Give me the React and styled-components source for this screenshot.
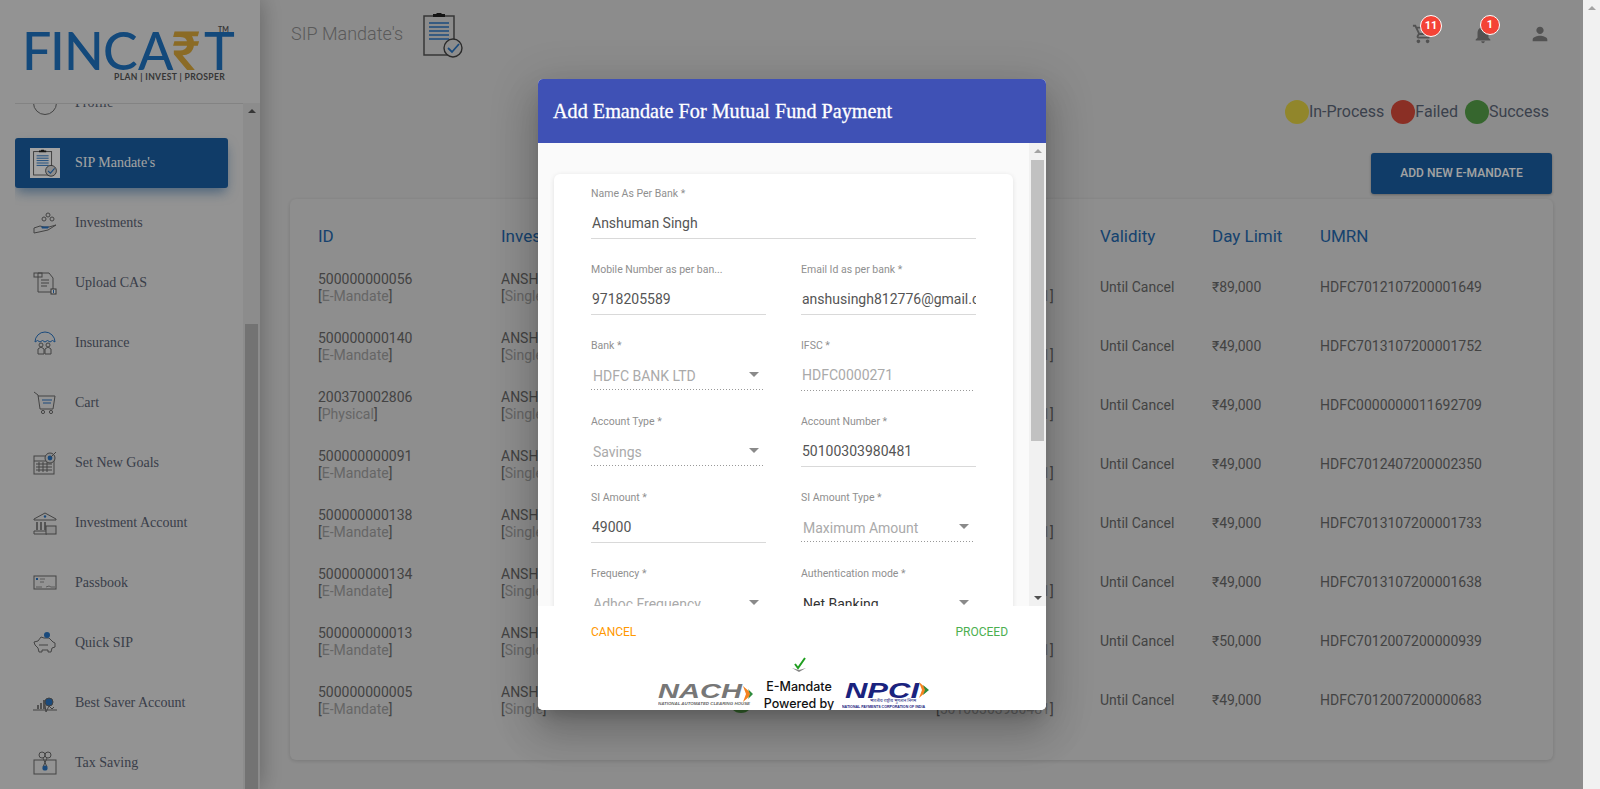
import React from 'react';
import styled, { createGlobalStyle } from 'styled-components';
import { MdOutlineShoppingCart, MdNotifications, MdPerson } from 'react-icons/md';

const Global = createGlobalStyle`
  html, body { margin: 0; height: 100%; overflow: hidden; }
  body { font-family: Roboto, "Liberation Sans", sans-serif; background: #dbdbdb; }
  * { box-sizing: border-box; }
`;

const Page = styled.div`display: flex; width: 1600px; height: 789px; overflow: hidden;`;
const App_ = styled.div`position: relative; display: flex; width: 1583px; height: 789px;`;
const PageScroll = styled.div`width: 17px; background: #f1f1f1; display: flex; justify-content: center; padding-top: 6px; position: relative;`;
const Tri = styled.span`
  display: block; width: 0; height: 0;
  border-left: ${p => p.$s || 4}px solid transparent;
  border-right: ${p => p.$s || 4}px solid transparent;
  ${p => p.$down ? `border-top: ${p.$h || 4}px solid ${p.$c || '#a3a3a3'};` : `border-bottom: ${p.$h || 4}px solid ${p.$c || '#a3a3a3'};`}
`;

/* sidebar */
const Sidebar = styled.aside`
  width: 260px; height: 789px; flex: none; background: #e6e6e6; display: flex; flex-direction: column;
  box-shadow: 0 0 22px rgba(0,0,0,.3); position: relative;
`;
const LogoBox = styled.div`height: 103px; flex: none; padding: 24px 0 0 22px;`;
const NavArea = styled.div`flex: 1; display: flex; min-height: 0;`;
const NavScroll = styled.div`flex: 1; margin-left: 15px; overflow: hidden; border-top: 1px solid #cdcdcd; margin-right: -2px;`;
const NavList = styled.ul`list-style: none; margin: -26px 0 0; padding: 0; width: 213px; display: flex; flex-direction: column; gap: 10px;`;
const NavItem = styled.li`
  height: 50px; flex: none; padding-left: 15px; display: flex; align-items: center; border-radius: 3px;
  font: 14px/20px "Liberation Serif", "Times New Roman", serif;
  color: ${p => p.$active ? '#ffffff' : '#5a6273'};
  background: ${p => p.$active ? '#195fa3' : 'transparent'};
  box-shadow: ${p => p.$active ? '0 6px 12px -2px rgba(25,95,163,.55)' : 'none'};
`;
const IconSlot = styled.span`
  width: 30px; height: 30px; margin-right: 15px; flex: none; display: flex; align-items: center; justify-content: center;
  background: ${p => p.$boxed ? '#fff' : 'transparent'};
`;
const Track = styled.div`
  width: 17px; flex: none; background: ${p => p.$bg || '#dcdcdc'}; display: flex; flex-direction: column; align-items: center; padding-top: 6px;
  position: relative; z-index: 1;
`;
const Thumb = styled.div`
  width: 13px; background: ${p => p.$c}; margin-top: ${p => p.$mt}px;
  ${p => p.$h ? `height: ${p.$h}px; flex: none;` : 'flex: 1;'}
`;
const TrackEnd = styled.div`margin-top: auto; margin-bottom: 6px;`;

/* main */
const Main = styled.main`flex: 1; min-width: 0; padding-right: 30px; background: #dcdcdc; display: flex; flex-direction: column;`;
const TopBar = styled.header`height: 68px; flex: none; display: flex; align-items: center; padding-left: 31px;`;
const PageTitle = styled.h1`margin: 0; font: 300 18px/24px Roboto, sans-serif; color: #8d8d8d; width: 132px; white-space: nowrap;`;
const TitleIcon = styled.span`display: block; height: 46px; margin-top: 1px;`;
const TopIcons = styled.div`margin-left: auto; display: flex; gap: 36px; margin-right: 1px;`;
const TopIcon = styled.span`
  position: relative; width: 24px; height: 24px; color: #818181; display: flex; align-items: center; justify-content: center;
  svg { display: block; width: 22px; height: 22px; }
  margin-left: ${p => p.$ml || 0}px;
`;
const Badge = styled.span`
  position: absolute; z-index: 20; left: 9px; border-radius: 11px;
  top: -7px;
  width: ${p => p.$small ? 20 : 22}px; height: ${p => p.$small ? 20 : 22}px;
  background: #f44336; border: 1px solid #fff; color: #fff; text-align: center;
  font: 700 11px/${p => p.$small ? 18 : 20}px Roboto, sans-serif;
`;
const LegendRow = styled.div`display: flex; justify-content: flex-end; margin: 32px 4px 0 0; height: 24px; gap: 7px;`;
const LegendItem = styled.span`display: flex; align-items: center; font: 16px/24px Roboto, sans-serif; color: #5c6678;`;
const Dot = styled.span`display: block; width: 24px; height: 24px; border-radius: 50%; background: ${p => p.$c};`;
const BtnRow = styled.div`display: flex; justify-content: flex-end; margin: 29px 1px 0 0;`;
const AddBtn = styled.button`
  width: 181px; height: 41px; border: 0; border-radius: 3px; background: #195fa3; color: #fff; padding: 0;
  font: 500 12px/41px Roboto, sans-serif; text-transform: uppercase; box-shadow: 0 1px 3px rgba(0,0,0,.3);
`;
const Card = styled.section`
  margin: 5px 0 0 30px; height: 561px; background: #dedede; border-radius: 6px; padding: 22px 0 0 28px;
  box-shadow: 0 1px 4px rgba(0,0,0,.14);
`;
const cols = '183px 199px 82px 318px 112px 108px 1fr';
const HeadRow = styled.div`
  display: grid; grid-template-columns: ${cols}; height: 30px; margin-bottom: 7px;
  font: 17px/30px Roboto, sans-serif; color: #2468ad;
`;
const Row = styled.div`
  display: grid; grid-template-columns: ${cols}; height: 59px; align-items: center;
  font: 14px/17px Roboto, sans-serif; color: #6a6a6a;
`;
const Line = styled.div`white-space: nowrap;`;
const Sub = styled.span`color: #a0a0a0;`;
const BankCell = styled.div`padding-left: 154px;`;
const StatusDot = styled(Dot)`margin: 0 auto;`;

/* modal */
const Backdrop = styled.div`position: absolute; inset: 0; background: rgba(0,0,0,.36); z-index: 10;`;
const Modal = styled.div`
  position: absolute; z-index: 11; left: 538px; top: 79px; width: 508px; height: 631px; border-radius: 5px; overflow: hidden;
  display: flex; flex-direction: column; background: #fff;
  box-shadow: 0 11px 15px -7px rgba(0,0,0,.2), 0 24px 38px 3px rgba(0,0,0,.14), 0 9px 46px 8px rgba(0,0,0,.12);
`;
const ModalHead = styled.div`
  height: 64px; flex: none; background: #3f51b5; color: #fff; padding-left: 15px;
  font: 400 20.2px/64px "Liberation Serif", serif; white-space: nowrap; -webkit-text-stroke: .3px #fff;
`;
const ModalBody = styled.div`height: 463px; flex: none; display: flex; background: #fafafa; overflow: hidden;`;
const ModalScrollArea = styled.div`flex: 1; padding: 31px 16px 0; overflow: hidden;`;
const FormCard = styled.div`
  background: #fff; border-radius: 6px; padding: 12px 37px 0; height: 520px;
  box-shadow: 0 1px 5px rgba(0,0,0,.1);
`;
const FieldGrid = styled.div`display: grid; grid-template-columns: 175px 175px; column-gap: 35px; grid-auto-rows: 76px;`;
const Field = styled.div`grid-column: ${p => p.$full ? '1 / -1' : 'auto'}; min-width: 0;`;
const Label = styled.div`font: 400 10.5px/16px Roboto, sans-serif; color: #8f8f8f; white-space: nowrap; margin-bottom: 9px;`;
const Value = styled.div`
  position: relative; height: 28px; padding: 0 0 3px 1px; border-bottom: 1px solid #d9d9d9;
  font: 14px/24px Roboto, sans-serif; color: #555; white-space: nowrap; overflow: hidden;
`;
const Disabled = styled(Value)`
  border: 0; color: #aaa; width: calc(100% - 3px); height: 28px;
  background: linear-gradient(to right, #999 33%, transparent 0) left bottom / 3px 1px repeat-x;
`;
const SelectBox = styled(Value)`
  padding: 1px 0 3px 2px; height: 27px; border-bottom: 0; color: ${p => p.$on ? '#333' : '#aaa'}; width: calc(100% - 1px);
  background: linear-gradient(to right, #999 33%, transparent 0) left bottom / 3px 1px repeat-x;
`;
const Caret = styled.span`position: absolute; right: 6px; top: 9px;`;
const ModalFooter = styled.div`flex: 1; background: #fff; display: flex; flex-direction: column;`;
const Actions = styled.div`height: 52px; flex: none; display: flex; justify-content: space-between; align-items: center; padding: 0 38px 0 53px;`;
const TextBtn = styled.span`font: 12px/20px Roboto, sans-serif; text-transform: uppercase; color: ${p => p.$c};`;
const LogoRow = styled.div`display: flex; padding-left: 120px;`;
const EmCol = styled.div`width: 70px; margin: -1px 8px 0 10px; display: flex; flex-direction: column; align-items: center; flex: none;`;
const EmMark = styled.svg`display: block; margin-bottom: 5px;`;
const EmText = styled.div`font: 500 12.5px/17px Inter, sans-serif; color: #111; white-space: nowrap;`;
const LogoSvg = styled.svg`display: block; flex: none; margin-top: ${p => p.$mt}px;`;
const LogoArt = styled.svg`display: block; overflow: visible;`;
const PlainIcon = styled.svg`display: block;`;

const Logo = () => (
  <LogoArt width="212" height="56" viewBox="0 0 212 56">
    <text y="46" x="0 28 42 81 116 150 182" fontFamily="Lato" fontSize="52" fontWeight="500" fill="#1f72c0">
      FINCA<tspan fill="#d9a83a" fontFamily="Roboto" fontWeight="500" fontSize="54">₹</tspan>T
    </text>
    <text x="92" y="56" fontFamily="Lato" fontWeight="700" fontSize="8.6" letterSpacing=".35" fill="#555">PLAN | INVEST | PROSPER</text>
    <text x="196" y="8" fontFamily="Lato" fontSize="7" fontWeight="700" fill="#555">TM</text>
  </LogoArt>
);

const st = { stroke: '#6a6a6a', fill: 'none', strokeWidth: 1 };
const accent = '#2a75c3';
const Ico = ({ children }) => <PlainIcon width="24" height="24" viewBox="0 0 24 24">{children}</PlainIcon>;

const Clip = ({ w = 24, h = 28 }) => (
  <PlainIcon width={w} height={h} viewBox="0 0 40 46">
    <rect x="1" y="4" width="30" height="39" fill="none" stroke="#555" strokeWidth="1.5" />
    <path d="M10 4V2h3l1-1h4l1 1h3v3H10z" fill="#222" />
    <path d="M6 11h20M6 15h20M6 19h20M6 23h20M6 27h20" stroke={accent} strokeWidth="1.6" />
    <circle cx="30" cy="36" r="9" fill="#dcdcdc" stroke="#444" strokeWidth="1.4" />
    <path d="M25 36l4 4 7-8" fill="none" stroke={accent} strokeWidth="1.8" />
  </PlainIcon>
);
const icons = {
  profile: <Ico><circle cx="12" cy="12" r="11.5" {...st} /><path d="M4 8q2 6 4 1M20 8q-2 6-4 1" stroke={accent} fill="none" /></Ico>,
  sip: <Clip />,
  invest: <Ico><path d="M1 17l6-2 4 1h5l7-2-8 5-9 2-5 1z" {...st} /><path d="M8 15.5h8l-1 2H9z" fill={accent} /><circle cx="15" cy="4" r="2" {...st} /><circle cx="11" cy="8" r="2" {...st} /><circle cx="19" cy="8" r="2" {...st} /></Ico>,
  upload: <Ico><path d="M5 2h11l4 5v14H5z" {...st} /><rect x="1" y="2" width="8" height="4" {...st} /><path d="M8 9h8M8 12h8M8 15h6" {...st} /><rect x="18" y="18" width="5" height="5" fill="#fff" stroke="#555" /><path d="M20.5 19v3" stroke={accent} /></Ico>,
  insurance: <Ico><path d="M2 11a10 10 0 0 1 20 0q-2.5-3-5 0q-2.5-3-5 0q-2.5-3-5 0q-2.5-3-5 0z" stroke={accent} fill="none" /><circle cx="8" cy="14" r="2" {...st} /><circle cx="15" cy="14" r="2" {...st} /><path d="M5 23v-5l3-2 3 2v5zM12 23v-5l3-2 3 2v5z" {...st} /></Ico>,
  cart: <Ico><path d="M1 1l4 3 2 14h13l2-13H5" {...st} /><path d="M9 9h10M10 12h8" stroke={accent} /><circle cx="10" cy="21" r="1.6" {...st} /><circle cx="18" cy="21" r="1.6" {...st} /></Ico>,
  goals: <Ico><rect x="1" y="5" width="20" height="18" {...st} /><path d="M1 10h20M3 13h16M3 16h16M3 19h16M6 11v10M10 11v10M14 11v10" stroke="#6a6a6a" /><circle cx="17" cy="7" r="5" fill="#dcdcdc" stroke="#666" /><circle cx="17" cy="7" r="2.4" fill={accent} /><path d="M18 6l5-5" {...st} /></Ico>,
  account: <Ico><path d="M1 8l11-6 11 6v1H1z" {...st} /><path d="M4 11v8M8 11v8M12 11v8" stroke="#666" strokeWidth="1.5" /><path d="M1 20h13v3H1z" {...st} /><rect x="13" y="15" width="10" height="8" fill="#dcdcdc" stroke="#666" /><circle cx="12" cy="5.5" r="1.2" fill={accent} /></Ico>,
  passbook: <Ico><rect x="1" y="5" width="22" height="13" {...st} /><path d="M3 8h2" stroke={accent} strokeWidth="2" /><path d="M7 8h5M3 16h6M13 16l3-1 2 1h4M7 11h4" stroke="#777" strokeWidth=".8" fill="none" /></Ico>,
  quick: <Ico><path d="M1 11l4-1 3-4 3 1h5l4 4 2 1v4l-3 1-1 4h-3v-2H9v2H6l-1-4-3-3z" {...st} /><circle cx="14" cy="4" r="3" fill={accent} /><path d="M6 14h9" {...st} /></Ico>,
  saver: <Ico><path d="M0 19h24" {...st} /><path d="M5 18v-4M8 18v-6M11 18V9" stroke="#666" strokeWidth="1.6" /><circle cx="16" cy="11" r="4" fill={accent} stroke="#666" /><path d="M12 14l1 7 3-6 3 3 2-2" {...st} /></Ico>,
  tax: <Ico><rect x="1" y="9" width="22" height="14" {...st} /><circle cx="9" cy="4" r="3" {...st} /><circle cx="15" cy="4" r="3" {...st} /><path d="M10 7l4 9M14 7l-4 9" {...st} /><circle cx="12" cy="17" r="2.6" fill={accent} /></Ico>,
};

const navItems = [
  ['Profile', 'profile'], ["SIP Mandate's", 'sip', true], ['Investments', 'invest'], ['Upload CAS', 'upload'],
  ['Insurance', 'insurance'], ['Cart', 'cart'], ['Set New Goals', 'goals'], ['Investment Account', 'account'],
  ['Passbook', 'passbook'], ['Quick SIP', 'quick'], ['Best Saver Account', 'saver'], ['Tax Saving', 'tax'],
];

const rows = [
  ['500000000056', 'E-Mandate', '₹89,000', 'HDFC7012107200001649'],
  ['500000000140', 'E-Mandate', '₹49,000', 'HDFC7013107200001752'],
  ['200370002806', 'Physical', '₹49,000', 'HDFC0000000011692709'],
  ['500000000091', 'E-Mandate', '₹49,000', 'HDFC7012407200002350'],
  ['500000000138', 'E-Mandate', '₹49,000', 'HDFC7013107200001733'],
  ['500000000134', 'E-Mandate', '₹49,000', 'HDFC7013107200001638'],
  ['500000000013', 'E-Mandate', '₹50,000', 'HDFC7012007200000939'],
  ['500000000005', 'E-Mandate', '₹49,000', 'HDFC7012007200000683'],
];

const Input = ({ label, value, full }) => (
  <Field $full={full}><Label>{label}</Label><Value>{value}</Value></Field>
);
const Dis = ({ label, value }) => (
  <Field><Label>{label}</Label><Disabled>{value}</Disabled></Field>
);
const Sel = ({ label, value, on }) => (
  <Field>
    <Label>{label}</Label>
    <SelectBox $on={on}>{value}<Caret><Tri $down $s={5} $h={5} $c="#8a8a8a" /></Caret></SelectBox>
  </Field>
);

export default function App() {
  return (
    <Page>
      <Global />
      <App_>
        <Sidebar>
          <LogoBox><Logo /></LogoBox>
          <NavArea>
            <NavScroll>
              <NavList>
                {navItems.map(([t, ic, a]) => (
                  <NavItem key={t} $active={a}>
                    <IconSlot $boxed={a}>{icons[ic]}</IconSlot>{t}
                  </NavItem>
                ))}
              </NavList>
            </NavScroll>
            <Track>
              <Tri $c="#555" />
              <Thumb $c="#b4b4b4" $mt={211} />
            </Track>
          </NavArea>
        </Sidebar>
        <Main>
          <TopBar>
            <PageTitle>SIP Mandate's</PageTitle>
            <TitleIcon><Clip w={40} h={46} /></TitleIcon>
            <TopIcons>
              <TopIcon><MdOutlineShoppingCart /><Badge>11</Badge></TopIcon>
              <TopIcon><MdNotifications /><Badge $small>1</Badge></TopIcon>
              <TopIcon $ml={-3}><MdPerson /></TopIcon>
            </TopIcons>
          </TopBar>
          <LegendRow>
            <LegendItem><Dot $c="#e3d244" />In-Process</LegendItem>
            <LegendItem><Dot $c="#d84a3a" />Failed</LegendItem>
            <LegendItem><Dot $c="#55a048" />Success</LegendItem>
          </LegendRow>
          <BtnRow><AddBtn>Add New E-Mandate</AddBtn></BtnRow>
          <Card>
            <HeadRow>
              <div>ID</div><div>Investor</div><div>Status</div><div />
              <div>Validity</div><div>Day Limit</div><div>UMRN</div>
            </HeadRow>
            {rows.map(r => (
              <Row key={r[0]}>
                <div><Line>{r[0]}</Line><Line>[<Sub>{r[1]}</Sub>]</Line></div>
                <div><Line>ANSHUMAN SINGH</Line><Line>[<Sub>Single</Sub>]</Line></div>
                <StatusDot $c="#55a048" />
                <BankCell><Line>HDFC BANK LTD</Line><Line>[<Sub>50100303980481</Sub>]</Line></BankCell>
                <div>Until Cancel</div>
                <div>{r[2]}</div>
                <div>{r[3]}</div>
              </Row>
            ))}
          </Card>
        </Main>
        <Backdrop />
        <Modal>
          <ModalHead>Add Emandate For Mutual Fund Payment</ModalHead>
          <ModalBody>
            <ModalScrollArea>
              <FormCard>
                <FieldGrid>
                  <Input full label="Name As Per Bank *" value="Anshuman Singh" />
                  <Input label="Mobile Number as per ban..." value="9718205589" />
                  <Input label="Email Id as per bank *" value="anshusingh812776@gmail.com" />
                  <Sel label="Bank *" value="HDFC BANK LTD" />
                  <Dis label="IFSC *" value="HDFC0000271" />
                  <Sel label="Account Type *" value="Savings" />
                  <Input label="Account Number *" value="50100303980481" />
                  <Input label="SI Amount *" value="49000" />
                  <Sel label="SI Amount Type *" value="Maximum Amount" />
                  <Sel label="Frequency *" value="Adhoc Frequency" />
                  <Sel on label="Authentication mode *" value="Net Banking" />
                </FieldGrid>
              </FormCard>
            </ModalScrollArea>
            <Track $bg="#f1f1f1">
              <Tri />
              <Thumb $c="#c1c1c1" $mt={7} $h={281} />
              <TrackEnd><Tri $down $c="#505050" /></TrackEnd>
            </Track>
          </ModalBody>
          <ModalFooter>
            <Actions>
              <TextBtn $c="#ff9800">Cancel</TextBtn>
              <TextBtn $c="#4caf50">Proceed</TextBtn>
            </Actions>
            <LogoRow>
              <LogoSvg $mt={25} width="96" height="24" viewBox="0 0 96 24">
                <text x="0" y="15" fontFamily="Liberation Sans" fontStyle="italic" fontWeight="700" fontSize="21" textLength="84" lengthAdjust="spacingAndGlyphs" fill="#777">NACH</text>
                <path d="M85 3l9 8-9 8 3-8z" fill="#f58220" />
                <path d="M90 6l5 5-5 5 2-5z" fill="#2e8b3d" />
                <text x="0" y="22" fontFamily="Liberation Sans" fontStyle="italic" fontWeight="700" fontSize="4" textLength="92" lengthAdjust="spacingAndGlyphs" fill="#666">NATIONAL AUTOMATED CLEARING HOUSE</text>
              </LogoSvg>
              <EmCol>
                <EmMark width="20" height="16" viewBox="0 0 20 16">
                  <path d="M6 7l3 4 7-10" fill="none" stroke="#1f9e1f" strokeWidth="2" />
                  <path d="M3 11l7 4 7-4-7 2z" fill="#888" />
                </EmMark>
                <EmText>E-Mandate</EmText>
                <EmText>Powered by</EmText>
              </EmCol>
              <LogoSvg $mt={23} width="88" height="28" viewBox="0 0 88 28">
                <text x="3" y="17" fontFamily="Liberation Sans" fontStyle="italic" fontWeight="700" fontSize="22" textLength="74" lengthAdjust="spacingAndGlyphs" fill="#1a237e">NPCI</text>
                <path d="M77 1l9 8-9 8 3-8z" fill="#f58220" />
                <path d="M81 4l6 5-6 5 2-5z" fill="#2e8b3d" />
                <text x="28" y="21" fontFamily="Noto Sans" fontWeight="400" fontSize="4.5" fill="#1a237e">भारतीय राष्ट्रीय भुगतान निगम</text>
                <text x="0" y="27" fontFamily="Liberation Sans" fontWeight="700" fontSize="4" textLength="83" lengthAdjust="spacingAndGlyphs" fill="#1a237e">NATIONAL PAYMENTS CORPORATION OF INDIA</text>
              </LogoSvg>
            </LogoRow>
          </ModalFooter>
        </Modal>
      </App_>
      <PageScroll><Tri $c="#a3a3a3" /></PageScroll>
    </Page>
  );
}
